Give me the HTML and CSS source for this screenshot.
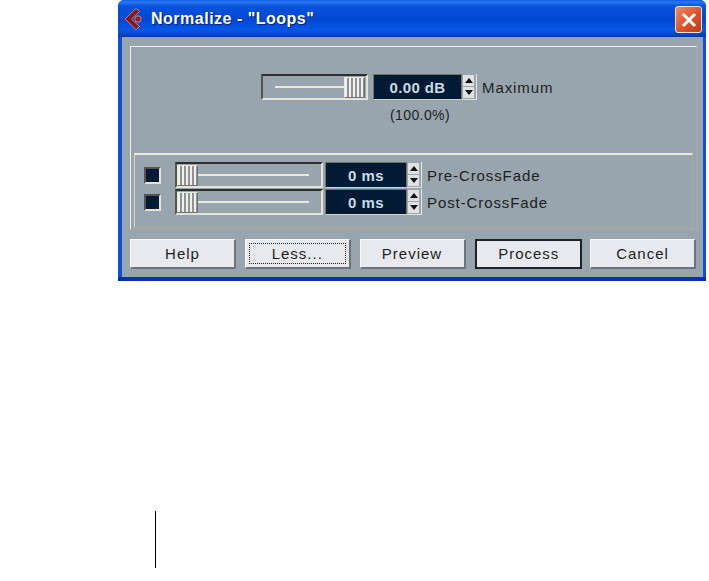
FILE: index.html
```html
<!DOCTYPE html>
<html lang="en">
<head>
    <meta charset="UTF-8">
    <title>Normalize - "Loops"</title>
    <link rel="stylesheet" href="styles.css">
</head>
<body>
<div class="window">
    <div class="titlebar">
        <svg class="app-icon" width="22" height="24" viewBox="0 0 22 24">
            <path d="M13 1.5 L2 12 L13 22.5 L16.5 19.5 L8.5 12 L16.5 4.5 Z" fill="#8e1212" stroke="#e8c8c8" stroke-width="0.6"/>
            <circle cx="15" cy="12" r="3.2" fill="#a01818" stroke="#e8c8c8" stroke-width="0.6"/>
        </svg>
        <span class="title-text">Normalize - "Loops"</span>
        <div class="close-btn">
            <svg width="18" height="18" viewBox="0 0 18 18">
                <path d="M3 3 L15 15 M15 3 L3 15" stroke="#fff" stroke-width="3" fill="none"/>
            </svg>
        </div>
    </div>
    <div class="client">
        <div class="panel">
            <div class="max-block">
                <div class="row">
                    <div class="slider slider-max">
                        <div class="track"></div>
                        <div class="thumb"></div>
                    </div>
                    <div class="field field-db">0.00 dB</div>
                    <div class="spinner">
                        <div class="spin spin-up"></div>
                        <div class="spin spin-down"></div>
                    </div>
                    <span class="label">Maximum</span>
                </div>
                <div class="percent">(100.0%)</div>
            </div>
            <div class="group">
                <div class="row fade-row">
                    <div class="check"></div>
                    <div class="slider slider-fade">
                        <div class="thumb"></div>
                        <div class="track"></div>
                    </div>
                    <div class="field field-ms">0 ms</div>
                    <div class="spinner">
                        <div class="spin spin-up"></div>
                        <div class="spin spin-down"></div>
                    </div>
                    <span class="label">Pre-CrossFade</span>
                </div>
                <div class="row fade-row">
                    <div class="check"></div>
                    <div class="slider slider-fade">
                        <div class="thumb"></div>
                        <div class="track"></div>
                    </div>
                    <div class="field field-ms">0 ms</div>
                    <div class="spinner">
                        <div class="spin spin-up"></div>
                        <div class="spin spin-down"></div>
                    </div>
                    <span class="label">Post-CrossFade</span>
                </div>
            </div>
        </div>
        <div class="buttons">
            <div class="btn">Help</div>
            <div class="btn btn-focus"><span>Less...</span></div>
            <div class="btn">Preview</div>
            <div class="btn btn-default">Process</div>
            <div class="btn">Cancel</div>
        </div>
    </div>
</div>
<div class="margin-rule"></div>
</body>
</html>
```

FILE: styles.css
```css
* {
    box-sizing: border-box;
}

body {
    margin: 0;
    background: #fff;
    font-family: "Liberation Sans", Arial, sans-serif;
    color: #1c1f22;
}

.window {
    margin-left: 118px;
    width: 588px;
    height: 281px;
    background: #0a50d8;
    border-bottom: 4px solid #0234a8;
    border-radius: 6px 6px 0 0;
    display: flex;
    flex-direction: column;
    overflow: hidden;
}

.titlebar {
    height: 37px;
    flex: none;
    display: flex;
    align-items: center;
    padding: 0 4px 0 5px;
    background: linear-gradient(to bottom, #0a58e4 0, #2a7cf0 2px, #0852dc 6px, #0048d2 20px, #0858e8 30px, #0448c8 34px, #0236a4 37px);
}

.app-icon {
    flex: none;
    margin-top: 1px;
}

.title-text {
    margin-left: 6px;
    color: #fff;
    font-size: 16px;
    font-weight: bold;
    letter-spacing: 0.5px;
    text-shadow: 1px 1px 1px #0a1f70;
    flex: 1;
}

.close-btn {
    width: 27px;
    height: 27px;
    margin-top: 2px;
    border: 1px solid #f0e4e0;
    border-radius: 3px;
    background: linear-gradient(135deg, #ec8a68, #d8532a 55%, #c03c18);
    display: flex;
    align-items: center;
    justify-content: center;
}

.client {
    flex: 1;
    margin: 0 3px 0 4px;
    background: #98a4ae;
    padding: 9px 7px 0 8px;
    display: flex;
    flex-direction: column;
}

.panel {
    height: 184px;
    margin-right: -1px;
    border-top: 1px solid #f2f1ea;
    border-left: 1px solid #f2f1ea;
    border-right: 1px solid #a9aba2;
    border-bottom: 1px solid #a9aba2;
    padding: 0 3px 1px 3px;
    display: flex;
    flex-direction: column;
    justify-content: space-between;
}

.max-block {
    padding: 27px 0 0 127px;
}

.row {
    display: flex;
    align-items: center;
}

.slider {
    display: flex;
    align-items: center;
    border-top: 2px solid #2e2e2a;
    border-left: 2px solid #55554c;
    border-bottom: 2px solid #e6e4d8;
    border-right: 2px solid #e6e4d8;
}

.slider-max {
    width: 107px;
    height: 26px;
    padding: 0 1px 0 12px;
}

.slider-fade {
    width: 148px;
    height: 26px;
    padding: 0 12px 0 0;
    margin-left: 14px;
}

.thumb {
    flex: none;
    width: 21px;
    height: 21px;
    border: 1px solid #e8e8e2;
    border-right-color: #6f736f;
    border-bottom-color: #6f736f;
    background: repeating-linear-gradient(to right, #f0f0ec 0, #f0f0ec 2px, #8e9296 2px, #8e9296 4px);
}

.track {
    flex: 1;
    height: 2px;
    background: #ece9d8;
}

.field {
    height: 26px;
    background: #021a33;
    border-top: 1px solid #77735f;
    border-left: 1px solid #77735f;
    border-right: 1px solid #77735f;
    border-bottom: 1px solid #d6d4c6;
    color: #c6dce6;
    font-size: 15px;
    font-weight: bold;
    letter-spacing: 0.4px;
    display: flex;
    align-items: center;
    justify-content: center;
}

.field-db {
    width: 89px;
    margin-left: 5px;
}

.field-ms {
    width: 82px;
    margin-left: 2px;
}

.spinner {
    width: 15px;
    height: 26px;
    flex: none;
    display: flex;
    flex-direction: column;
    gap: 1px;
    padding: 1px 2px 1px 1px;
    border-right: 1px solid #e6e4d8;
    border-bottom: 1px solid #e6e4d8;
}

.spin {
    flex: 1;
    background: #dfe1e4;
    display: flex;
    align-items: center;
    justify-content: center;
}

.spin::after {
    content: "";
    border-left: 4px solid transparent;
    border-right: 4px solid transparent;
}

.spin-up::after {
    border-bottom: 5px solid #101010;
}

.spin-down::after {
    border-top: 5px solid #101010;
}

.label {
    margin-left: 5px;
    font-size: 15px;
    letter-spacing: 0.9px;
    white-space: nowrap;
}

.percent {
    margin: 7px 0 0 129px;
    font-size: 14px;
    letter-spacing: 0.4px;
}

.group {
    height: 75px;
    border-top: 2px solid #ece9d8;
    border-left: 1px solid #d8d8cc;
    border-right: 1px solid #a9aba2;
    border-bottom: 1px solid #a9aba2;
    padding: 7px 0 0 9px;
    display: flex;
    flex-direction: column;
    gap: 1px;
}

.check {
    width: 17px;
    height: 17px;
    flex: none;
    background: #021a33;
    border-top: 2px solid #55554c;
    border-left: 2px solid #55554c;
    border-right: 2px solid #e6e4d8;
    border-bottom: 2px solid #e6e4d8;
}

.buttons {
    margin-top: 9px;
    display: flex;
    justify-content: space-between;
}

.btn {
    width: 106px;
    height: 30px;
    background: #e8e9ef;
    border-top: 1px solid #f8f8f4;
    border-left: 1px solid #f8f8f4;
    border-right: 2px solid #6f7478;
    border-bottom: 2px solid #6f7478;
    font-size: 15px;
    letter-spacing: 1px;
    display: flex;
    align-items: center;
    justify-content: center;
}

.btn-focus {
    padding: 3px;
}

.btn-focus span {
    flex: 1;
    align-self: stretch;
    border: 1px dotted #222;
    display: flex;
    align-items: center;
    justify-content: center;
}

.btn-default {
    border: 2px solid #1c2226;
    width: 107px;
    margin: 0 -1px 0 1px;
    padding-bottom: 1px;
}

.margin-rule {
    width: 1px;
    height: 57px;
    margin: 230px 0 0 155px;
    background: #000;
}
```
